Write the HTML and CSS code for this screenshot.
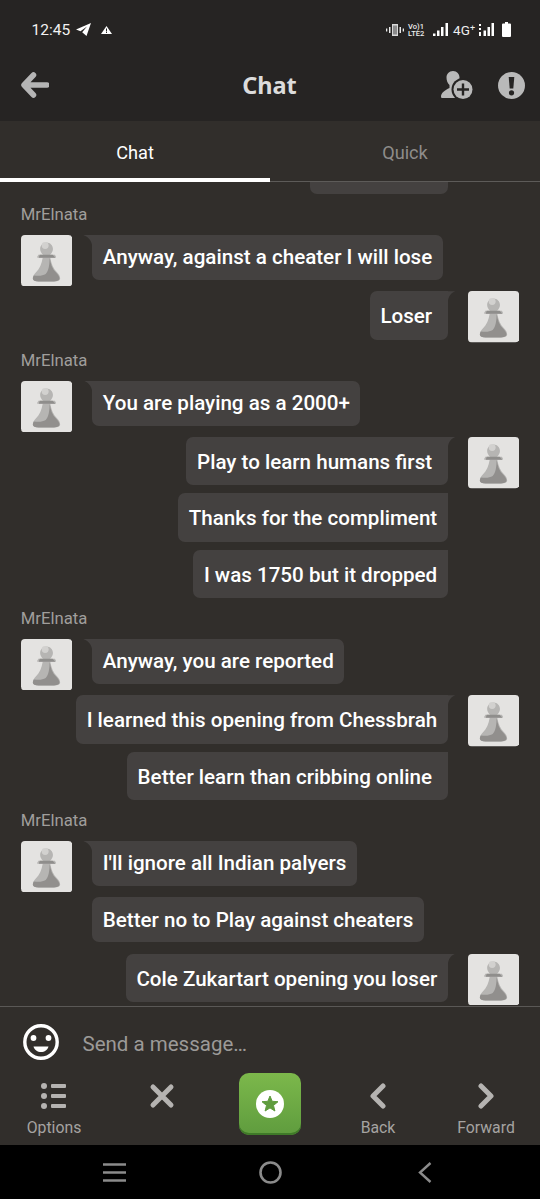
FILE: index.html
```html
<!DOCTYPE html>
<html lang="en">
<head>
<meta charset="utf-8">
<title>Chat</title>
<link rel="stylesheet" href="styles.css">
</head>
<body>
<svg class="defs" width="0" height="0" aria-hidden="true">
  <symbol id="pawn" viewBox="0 0 52 52">
    <rect width="52" height="52" rx="4" fill="#e4e3e1"/>
    <path d="M12 44c0-2 1-4 3-6 4-4 6-9 7-15h-5c-.5 0-.8-.5-.6-1l1-1.500.1-.5h4.900c-1.500-1.500-3-3.500-3-6 0-3.500 3-6.500 6.500-6.500s6.500 3 6.500 6.500c0 2.500-1.500 4.500-3 6h4.900l1 1.500c.3.600 0 1.500-.6 1.500h-5c1 6 3 11 7 15 2 2 3 4 3 6 0 2-2 3-6 3H18c-4 0-6-1-6-3z" fill="#b6b5b3"/>
    <path d="M29 23c1 6 2.500 11 6.500 15 2 2 3.500 4 3.500 6 0 2-3 3-7 3H18c-4 0-6-1-6-3 0-1 .3-2 1-3 5 .5 9 .5 12-1.500 3-3 4-9 4-16.500z" fill="#918f8d"/>
    <path d="M19 20h13l3 3H18z" fill="#8f8e8c"/>
    <circle cx="24.500" cy="10.500" r="3.500" fill="#d2d1cf"/>
  </symbol>
</svg>

<div class="app">
  <header class="topbar">
    <div class="status">
      <div class="status-group">
        <span class="time">12:45</span>
        <svg class="plane" viewBox="0 0 15 13"><path d="M15 0 0 6.500l4.500 1.800L11 3.500 6.200 9.200 10.500 13z" fill="#fff"/></svg>
        <svg class="warn" viewBox="0 0 11 8"><path d="M5.500 0 11 8H0z" fill="#fff"/><path d="M5 2.500h1v3H5zM5 6h1v1H5z" fill="#262423"/></svg>
      </div>
      <div class="status-group status-right">
        <svg class="vib" viewBox="0 0 18 12"><path d="M6 0h6v12H6z" fill="#d8d8d8"/><path d="M7 1.500h4v9H7z" fill="#8a8a8a"/><path d="M3 3h1.500v6H3zM0 4.500h1.300v3H0zM13.500 3H15v6h-1.500zM16.700 4.500H18v3h-1.300z" fill="#e8e8e8"/></svg>
        <span class="vol"><span>Vo)1</span><span>LTE2</span></span>
        <svg class="sig" viewBox="0 0 15 13"><path d="M0 10.500h2.500V13H0zM4 7.500h2.500V13H4zM8 4h2.500v9H8zM12.500 0H15v13h-2.500z" fill="#fff"/></svg>
        <span class="net">4G<sup>+</sup></span>
        <svg class="sig" viewBox="0 0 15 13"><path d="M0 1h2v2H0zM0 5h2v2H0zM0 9h2v4H0zM4.500 7.500H7V13H4.500zM8.500 4H11v9H8.500zM12.500 0H15v13h-2.500z" fill="#fff"/></svg>
        <svg class="batt" viewBox="0 0 9 15"><path d="M3 0h3v1.500h2a1 1 0 0 1 1 1V14a1 1 0 0 1-1 1H1a1 1 0 0 1-1-1V2.500a1 1 0 0 1 1-1h2z" fill="#fff"/></svg>
      </div>
    </div>
    <div class="appbar">
      <svg class="back-arrow" viewBox="0 0 28 26"><path d="M12.500 3 3 13l9.500 10M4 13h22" fill="none" stroke="#b5b5b5" stroke-width="5.500" stroke-linecap="round" stroke-linejoin="round"/></svg>
      <h1 class="title">Chat</h1>
      <div class="appbar-actions">
        <svg class="add-user" viewBox="0 0 32 29"><path d="M12 0c4 0 6.500 3 6.500 6.500 0 3-1 5.500-3 7.500v2c1 1 2 1.500 3 2l-4 9H1.500C.5 27 0 26.500 0 25.500 0 22 4 19 8.500 17v-3c-2-2-3-4.500-3-7.500C5.500 3 8 0 12 0z" fill="#b9b9b9"/><circle cx="22" cy="18.500" r="11.500" fill="#262423"/><circle cx="22" cy="18.500" r="9.500" fill="#b9b9b9"/><path d="M22 12.500v12M16 18.500h12" stroke="#262423" stroke-width="2.400"/></svg>
        <svg class="alert" viewBox="0 0 27 27"><circle cx="13.500" cy="13.500" r="13.500" fill="#b9b9b9"/><path d="M10.700 5h5.600l-1 11.500h-3.600z" fill="#262423"/><circle cx="13.500" cy="20.800" r="2.600" fill="#262423"/></svg>
      </div>
    </div>
  </header>

  <nav class="tabs">
    <div class="tab tab-active">Chat</div>
    <div class="tab">Quick</div>
  </nav>

  <main class="messages">
    <div class="row mine">
      <div class="bubble bubble-clipped"></div>
      <div class="slot"></div>
    </div>

    <div class="name">MrElnata</div>
    <div class="row theirs">
      <svg class="avatar"><use href="#pawn"/></svg>
      <div class="bubble tail">Anyway, against a cheater I will lose</div>
    </div>
    <div class="row mine">
      <div class="bubble tail">Loser </div>
      <svg class="avatar"><use href="#pawn"/></svg>
    </div>

    <div class="name">MrElnata</div>
    <div class="row theirs">
      <svg class="avatar"><use href="#pawn"/></svg>
      <div class="bubble tail">You are playing as a 2000+</div>
    </div>
    <div class="row mine">
      <div class="bubble tail">Play to learn humans first </div>
      <svg class="avatar"><use href="#pawn"/></svg>
    </div>
    <div class="row mine next">
      <div class="bubble">Thanks for the compliment</div>
      <div class="slot"></div>
    </div>
    <div class="row mine next">
      <div class="bubble">I was 1750 but it dropped</div>
      <div class="slot"></div>
    </div>

    <div class="name">MrElnata</div>
    <div class="row theirs">
      <svg class="avatar"><use href="#pawn"/></svg>
      <div class="bubble tail">Anyway, you are reported</div>
    </div>
    <div class="row mine">
      <div class="bubble tail">I learned this opening from Chessbrah</div>
      <svg class="avatar"><use href="#pawn"/></svg>
    </div>
    <div class="row mine next">
      <div class="bubble">Better learn than cribbing online </div>
      <div class="slot"></div>
    </div>

    <div class="name">MrElnata</div>
    <div class="row theirs">
      <svg class="avatar"><use href="#pawn"/></svg>
      <div class="bubble tail">I'll ignore all Indian palyers</div>
    </div>
    <div class="row theirs">
      <div class="slot"></div>
      <div class="bubble">Better no to Play against cheaters</div>
    </div>
    <div class="row mine">
      <div class="bubble tail">Cole Zukartart opening you loser</div>
      <svg class="avatar"><use href="#pawn"/></svg>
    </div>
  </main>

  <footer class="bottom">
    <div class="composer">
      <svg class="smiley" viewBox="0 0 36 36"><circle cx="18" cy="18" r="16.200" fill="none" stroke="#fff" stroke-width="3.400"/><circle cx="10.500" cy="14" r="2.900" fill="#fff"/><circle cx="25.500" cy="14" r="2.900" fill="#fff"/><path d="M10.500 22.500h15c-.8 3.500-4 5.500-7.500 5.500s-6.700-2-7.500-5.500z" fill="#fff"/></svg>
      <span class="placeholder">Send a message…</span>
    </div>
    <div class="toolbar">
      <div class="tool">
        <svg class="tool-icon" viewBox="0 0 26 26"><g fill="#b5b3b1"><circle cx="3" cy="3" r="3"/><circle cx="3" cy="13" r="3"/><circle cx="3" cy="23" r="3"/><rect x="10" y="1" width="15" height="4" rx="1"/><rect x="10" y="11" width="15" height="4" rx="1"/><rect x="10" y="21" width="15" height="4" rx="1"/></g></svg>
        <span class="tool-label">Options</span>
      </div>
      <div class="tool">
        <svg class="tool-icon" viewBox="0 0 26 26"><path d="M4 4l18 18M22 4 4 22" stroke="#b5b3b1" stroke-width="5" stroke-linecap="round"/></svg>
      </div>
      <div class="tool tool-main">
        <div class="play-button">
          <svg class="star" viewBox="0 0 28 28"><circle cx="14" cy="14" r="14" fill="#fff"/><path d="M14 6l2.200 5.300 5.800.4-4.500 3.700 1.400 5.600L14 17.900 9.100 21l1.400-5.600L6 11.700l5.800-.4z" fill="#5f9c3e" stroke="#5f9c3e" stroke-width="1" stroke-linejoin="round"/></svg>
        </div>
      </div>
      <div class="tool">
        <svg class="tool-icon" viewBox="0 0 26 26"><path d="M18 3 8 13l10 10" fill="none" stroke="#b5b3b1" stroke-width="5" stroke-linecap="round" stroke-linejoin="round"/></svg>
        <span class="tool-label">Back</span>
      </div>
      <div class="tool">
        <svg class="tool-icon" viewBox="0 0 26 26"><path d="M8 3l10 10L8 23" fill="none" stroke="#b5b3b1" stroke-width="5" stroke-linecap="round" stroke-linejoin="round"/></svg>
        <span class="tool-label">Forward</span>
      </div>
    </div>
    <div class="sysnav">
      <svg class="sys-menu" viewBox="0 0 23 19"><path d="M0 1.500h23M0 9.500h23M0 17.500h23" stroke="#8b8b8b" stroke-width="2.600"/></svg>
      <svg class="sys-home" viewBox="0 0 23 23"><circle cx="11.500" cy="11.500" r="10" fill="none" stroke="#8b8b8b" stroke-width="2.600"/></svg>
      <svg class="sys-back" viewBox="0 0 14 21"><path d="M12.500 1 2 10.500 12.500 20" fill="none" stroke="#8b8b8b" stroke-width="2.400"/></svg>
    </div>
  </footer>
</div>
</body>
</html>
```

FILE: styles.css
```css
* { box-sizing: border-box; }
html, body { margin: 0; padding: 0; background: #312e2b; }
body { font-family: Roboto, "Liberation Sans", sans-serif; overflow: hidden; }
.defs { display: block; height: 0; }
.app { width: 540px; height: 1199px; display: flex; flex-direction: column; overflow: hidden; }

.topbar { height: 121px; flex: none; background: #262423; }
.status { height: 58px; padding: 1px 29px 0 31.500px; display: flex; align-items: center; justify-content: space-between; color: #fff; }
.status-group { display: flex; align-items: center; }
.time { font-size: 15.500px; line-height: 20px; width: 37.500px; color: #f2f2f2; }
.plane { width: 15px; height: 13px; margin-left: 7px; }
.warn { width: 11px; height: 8px; margin-left: 10px; }
.vib { width: 18px; height: 12px; }
.vol { display: flex; flex-direction: column; width: 18px; margin-left: 4px; font-size: 7.500px; line-height: 7px; color: #eee; font-weight: 500; }
.sig { width: 15px; height: 13px; margin-left: 7px; }
.net { font-size: 13.500px; line-height: 14px; margin-left: 5px; color: #eee; white-space: nowrap; }
.net sup { font-size: 9px; line-height: 0; vertical-align: 4px; }
.net + .sig { margin-left: 4px; }
.batt { width: 9px; height: 15px; margin-left: 8px; }

.appbar { height: 63px; padding: 0 15px 9px 21px; display: grid; grid-template-columns: 1fr auto 1fr; align-items: center; }
.back-arrow { width: 28px; height: 26px; }
.title { margin: 0 7px 0 0; font: 700 23.500px/30px "Noto Sans", sans-serif; color: #dcdcdc; }
.appbar-actions { display: flex; align-items: center; gap: 25px; justify-self: end; }
.add-user { width: 32px; height: 29px; margin-top: 1px; }
.alert { width: 27px; height: 27px; }

.tabs { height: 61px; flex: none; display: grid; grid-template-columns: 1fr 1fr; background: #312e2b; border-bottom: 1px solid #5d5b59; }
.tab { display: flex; align-items: center; justify-content: center; font-size: 18.200px; font-weight: 400; color: #8e8c8a; padding-top: 2px; }
.tab-active { color: #fff; border-bottom: 4px solid #fff; margin-bottom: -1px; padding-top: 5px; }

.messages { flex: 1 1 0; min-height: 0; overflow: hidden; display: flex; flex-direction: column; justify-content: flex-end; padding: 0 20.700px 4px; }
.name { flex: none; font-size: 16.700px; line-height: 20px; height: 20px; margin: 11px 0 10px; color: #a09e9c; }
.row { flex: none; display: flex; align-items: flex-start; gap: 20.300px; }
.row + .row { margin-top: 11.400px; }
.row.next { margin-top: 8px; }
.row.mine { justify-content: flex-end; }
.avatar, .slot { flex: none; width: 51.300px; }
.avatar { height: 51.500px; }
.row.theirs .avatar { margin-bottom: -6.500px; }
.row.mine .avatar { margin-bottom: -3.200px; }
.slot { height: 0; }
.bubble { position: relative; flex: none; background: #444140; color: #fff; font-size: 20.600px; font-weight: 500; line-height: 28px; padding: 8.500px 10.500px; border-radius: 7px; white-space: pre; }
.row.mine .bubble { padding-top: 11px; padding-bottom: 9.300px; border-top-right-radius: 0; }
.bubble-clipped { width: 137.500px; height: 48.300px; }
.bubble.tail::before { content: ""; position: absolute; top: 0; width: 9px; height: 13px; background: #444140; }
.row.theirs .bubble.tail { border-top-left-radius: 0; }
.row.theirs .bubble.tail::before { left: -9px; clip-path: path("M0 0H9V13C9 7 6 2 0 0Z"); }
.row.mine .bubble.tail::before { right: -7.500px; width: 7.500px; clip-path: path("M7.500 0H0V13C0 7 2 2 7.500 0Z"); }

.bottom { flex: none; }
.composer { height: 67px; border-top: 1px solid #5a5856; background: #312e2b; display: flex; align-items: center; padding: 0 0 0 23px; gap: 23.500px; }
.smiley { width: 36px; height: 36px; flex: none; margin-top: 4px; }
.placeholder { font-size: 20.500px; line-height: 28px; color: #9c9a98; margin-top: 7px; }

.toolbar { height: 72px; display: grid; grid-template-columns: repeat(5, 1fr); background: #312e2b; }
.tool { display: flex; flex-direction: column; align-items: center; padding-top: 10px; }
.tool-icon { width: 26px; height: 26px; flex: none; }
.tool-label { margin-top: 8.500px; font-size: 15.800px; line-height: 20px; color: #a5a3a1; }
.tool-main { padding-top: 0; }
.play-button { width: 61.500px; height: 62px; border-radius: 10px; background: linear-gradient(#7cb84b, #5f9c3e); box-shadow: inset 0 -2px 0 #3f7a28; display: flex; align-items: center; justify-content: center; }
.star { width: 28px; height: 28px; }

.sysnav { height: 54px; background: #000; display: flex; align-items: center; padding-left: 102.500px; }
.sys-menu { width: 23px; height: 19px; flex: none; }
.sys-home { width: 23px; height: 23px; flex: none; margin-left: 133px; }
.sys-back { width: 14px; height: 21px; flex: none; margin-left: 136px; }
```
